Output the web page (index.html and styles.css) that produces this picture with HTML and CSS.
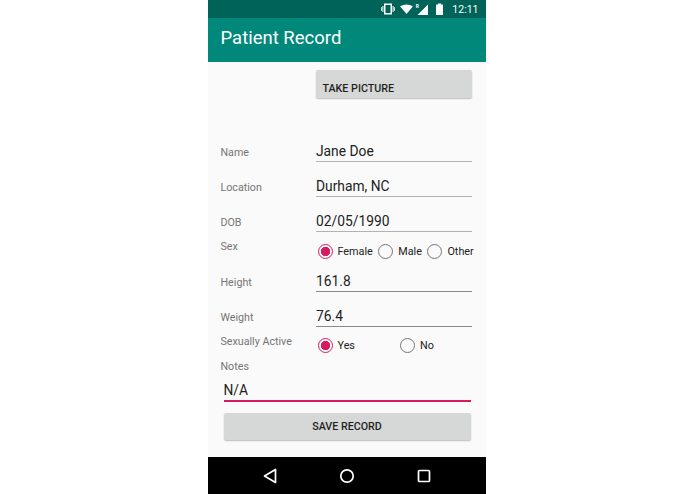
FILE: index.html
```html
<!DOCTYPE html>
<html lang="en">
<head>
    <meta charset="UTF-8">
    <title>Patient Record</title>
    <link rel="stylesheet" href="styles.css">
</head>
<body>
    <div class="phone">
        <div class="status-bar">
            <svg class="status-icons" width="62" height="12" viewBox="0 0 62 12">
                <!-- vibrate -->
                <path d="M3 .5h8v11H3z M4.5 2v8h5V2z" fill="#fff" fill-rule="evenodd"/>
                <path d="M1.4 3h1v6h-1z M11.6 3h1v6h-1z M0 4.3h.9v3.4H0z M13.1 4.3h.9v3.4h-.9z" fill="#fff"/>
                <!-- wifi -->
                <path d="M19 3.2q6.5-3.6 13 0L25.5 11z" fill="#fff"/>
                <!-- roaming + signal -->
                <text x="34.8" y="4.6" class="roam">R</text>
                <path d="M47 1.5V12H36.5z" fill="#fff"/>
                <!-- battery -->
                <path d="M55 1.5h2V.4h3v1.1h2V12h-7z" fill="#fff"/>
            </svg>
            <span class="clock">12:11</span>
        </div>
        <div class="app-bar">Patient Record</div>

        <div class="content">
            <div class="row photo-row">
                <button class="btn take-picture">TAKE PICTURE</button>
            </div>

            <div class="row field-row first-field">
                <label class="label">Name</label>
                <div class="field">Jane Doe</div>
            </div>
            <div class="row field-row">
                <label class="label">Location</label>
                <div class="field">Durham, NC</div>
            </div>
            <div class="row field-row">
                <label class="label">DOB</label>
                <div class="field">02/05/1990</div>
            </div>

            <div class="row sex-row">
                <label class="label">Sex</label>
                <div class="radios">
                    <span class="radio checked"></span><span class="radio-text female">Female</span>
                    <span class="radio"></span><span class="radio-text male">Male</span>
                    <span class="radio"></span><span class="radio-text">Other</span>
                </div>
            </div>

            <div class="row field-row">
                <label class="label">Height</label>
                <div class="field dark-line">161.8</div>
            </div>
            <div class="row field-row">
                <label class="label">Weight</label>
                <div class="field dark-line">76.4</div>
            </div>

            <div class="row active-row">
                <label class="label">Sexually Active</label>
                <div class="radios">
                    <span class="radio checked"></span><span class="radio-text yes">Yes</span>
                    <span class="radio"></span><span class="radio-text">No</span>
                </div>
            </div>

            <label class="label notes-label">Notes</label>
            <div class="notes">N/A</div>
            <button class="btn save">SAVE RECORD</button>
        </div>

        <div class="nav-bar">
            <svg width="14" height="16" viewBox="0 0 14 16">
                <path d="M12.5 1.5v13L1.5 8z" fill="none" stroke="#fff" stroke-width="1.7" stroke-linejoin="round"/>
            </svg>
            <svg width="16" height="16" viewBox="0 0 16 16">
                <circle cx="8" cy="8" r="6.2" fill="none" stroke="#fff" stroke-width="1.7"/>
            </svg>
            <svg width="14" height="14" viewBox="0 0 14 14">
                <rect x="1.5" y="1.5" width="11" height="11" rx="1" fill="none" stroke="#fff" stroke-width="1.7"/>
            </svg>
        </div>
    </div>
</body>
</html>
```

FILE: styles.css
```css
body {
    margin: 0;
    background-color: #fff;
    font-family: Roboto, "Liberation Sans", sans-serif;
}
.phone {
    width: 278px;
    height: 494px;
    margin-left: 208px;
    display: flex;
    flex-direction: column;
    overflow: hidden;
}
.status-bar {
    height: 18px;
    background-color: #00635a;
    display: flex;
    align-items: center;
    justify-content: flex-end;
    padding-right: 7.5px;
    color: #fff;
}
.status-icons {
    margin-right: 9px;
}
.roam {
    font-size: 5px;
    font-weight: 700;
    fill: #fff;
}
.clock {
    font-size: 10.5px;
}
.app-bar {
    height: 44px;
    background-color: #00897b;
    color: #fff;
    font-size: 18.5px;
    line-height: 41px;
    padding-left: 12.5px;
}
.content {
    height: 395px;
    background-color: #fafafa;
    box-sizing: border-box;
    padding: 8px 14px 0 12.5px;
}
.row {
    display: flex;
}
.photo-row {
    height: 28px;
    padding-left: 95.5px;
}
.btn {
    border: 0;
    border-radius: 2px;
    background-color: #d6d7d7;
    box-shadow: 0 1px 1.5px rgba(0, 0, 0, 0.25);
    color: #1f1f1f;
    font-family: inherit;
    font-size: 10.7px;
    font-weight: 500;
    padding: 0;
}
.take-picture {
    width: 156px;
    height: 28px;
    text-align: left;
    padding: 8px 0 0 6.5px;
}
.field-row {
    height: 35px;
    align-items: flex-end;
}
.first-field {
    margin-top: 29px;
}
.label {
    width: 95.5px;
    flex: none;
    color: #757575;
    font-size: 10.7px;
    line-height: 14px;
}
.field-row .label {
    padding-bottom: 2px;
}
.field {
    width: 156px;
    height: 24px;
    box-sizing: border-box;
    border-bottom: 1px solid #b3b3b3;
    color: #212121;
    font-size: 13.8px;
    line-height: 20px;
    padding-top: 3px;
}
.dark-line {
    border-bottom-color: #8a8a8a;
}
.sex-row {
    height: 17px;
    padding-top: 8px;
}
.active-row {
    height: 26px;
    padding-top: 8px;
}
.radios {
    display: flex;
    align-items: center;
    height: 16px;
    padding: 3px 0 0 1.5px;
    color: #212121;
    font-size: 10.8px;
    white-space: nowrap;
}
.active-row .radios {
    padding-top: 2px;
}
.radio {
    width: 15px;
    height: 15px;
    flex: none;
    box-sizing: border-box;
    border: 1.5px solid #757575;
    border-radius: 50%;
    margin-right: 5px;
}
.radio.checked {
    border-color: #d81b60;
    background: radial-gradient(circle, #d81b60 0 4.4px, transparent 4.9px);
}
.radio-text.female {
    margin-right: 5.5px;
}
.radio-text.male {
    margin-right: 5.5px;
}
.radio-text.yes {
    width: 62.5px;
}
.notes-label {
    display: block;
    margin-top: -1px;
}
.notes {
    width: 247px;
    height: 23px;
    box-sizing: border-box;
    margin: 5px 0 0 3px;
    border-bottom: 2px solid #d81b60;
    color: #212121;
    font-size: 13.8px;
    line-height: 18px;
    padding-top: 2px;
}
.save {
    display: block;
    width: 247px;
    height: 27px;
    margin: 11px 0 0 3px;
    text-align: center;
}
.nav-bar {
    height: 37px;
    background-color: #000;
    display: flex;
    align-items: center;
    justify-content: space-between;
    padding: 0 55px;
}
```
